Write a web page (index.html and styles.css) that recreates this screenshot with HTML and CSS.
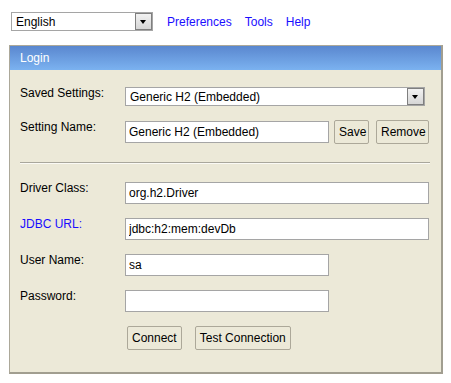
FILE: index.html
```html
<!DOCTYPE html>
<html lang="en">
<head>
    <meta charset="UTF-8">
    <title>H2 Console</title>
    <link rel="stylesheet" href="styles.css">
</head>
<body>
    <div class="topbar">
        <div class="select lang">
            <span class="select-text">English</span>
            <span class="select-arrow"></span>
        </div>
        <a href="#" class="link">Preferences</a>
        <a href="#" class="link">Tools</a>
        <a href="#" class="link">Help</a>
    </div>

    <div class="panel">
        <div class="panel-head">Login</div>
        <div class="panel-body">
            <div class="row first">
                <label class="label">Saved Settings:</label>
                <div class="select saved">
                    <span class="select-text">Generic H2 (Embedded)</span>
                    <span class="select-arrow"></span>
                </div>
            </div>
            <div class="row">
                <label class="label">Setting Name:</label>
                <input type="text" class="field short" value="Generic H2 (Embedded)">
                <button class="btn save">Save</button>
                <button class="btn remove">Remove</button>
            </div>

            <div class="sep"></div>

            <div class="row">
                <label class="label">Driver Class:</label>
                <input type="text" class="field long" value="org.h2.Driver">
            </div>
            <div class="row">
                <a href="#" class="label label-link">JDBC URL:</a>
                <input type="text" class="field long" value="jdbc:h2:mem:devDb">
            </div>
            <div class="row">
                <label class="label">User Name:</label>
                <input type="text" class="field short" value="sa">
            </div>
            <div class="row">
                <label class="label">Password:</label>
                <input type="password" class="field short" value="">
            </div>
            <div class="actions">
                <button class="btn">Connect</button>
                <button class="btn">Test Connection</button>
            </div>
        </div>
    </div>
</body>
</html>
```

FILE: styles.css
```css
body {
    font-family: "Liberation Sans", Arial, sans-serif;
    font-size: 12px;
    margin: 0;
    padding: 12px 0 0 9px;
    background-color: #fff;
    color: #000;
}
.topbar {
    display: flex;
    align-items: center;
    height: 19px;
    padding-left: 2px;
}
.link {
    color: #1a0dff;
    text-decoration: none;
    margin-left: 13px;
}
.lang + .link {
    margin-left: 14px;
}
.select {
    display: flex;
    align-items: center;
    justify-content: space-between;
    box-sizing: border-box;
    height: 19px;
    border: 1px solid #a5a5a5;
    background: #fff;
    padding: 0 0 0 4px;
}
.lang {
    width: 142px;
}
.saved {
    width: 300px;
}
.select-arrow {
    position: relative;
    box-sizing: border-box;
    width: 17px;
    height: 17px;
    border: 1px solid #7f7f7f;
    background: linear-gradient(#f2f2f2, #d6d6d6);
}
.select-arrow::after {
    content: "";
    position: absolute;
    left: 4px;
    top: 6px;
    border-left: 3.5px solid transparent;
    border-right: 3.5px solid transparent;
    border-top: 4px solid #000;
}
.panel {
    margin-top: 14px;
    width: 434px;
    box-sizing: border-box;
    border: 1px solid #aca899;
    border-right: 2px solid #a19e90;
    border-bottom: 2px solid #a19e90;
    background-color: #ece9d8;
}
.panel-head {
    height: 24px;
    line-height: 24px;
    padding-left: 10px;
    color: #fff;
    font-size: 12px;
    background: linear-gradient(#5a87cf, #7bb2f0);
}
.panel-body {
    padding: 17px 0 22px 10px;
}
.row {
    display: flex;
    align-items: flex-start;
    margin-bottom: 14px;
}
.row.first {
    margin-bottom: 15px;
}
.label {
    width: 105px;
    flex-shrink: 0;
    line-height: 14px;
    margin-top: -1px;
}
.label-link {
    color: #1a0dff;
    text-decoration: none;
}
.field {
    box-sizing: border-box;
    height: 22px;
    border: 1px solid #a5a5a5;
    background: #fff;
    padding: 0 3px;
    font-family: inherit;
    font-size: 12px;
    margin: 0;
    outline: none;
}
.short {
    width: 204px;
}
.long {
    width: 304px;
}
.btn {
    box-sizing: border-box;
    height: 24px;
    padding: 0 4px;
    margin: -1px 0 0 0;
    border: 1px solid #aca899;
    border-radius: 2px;
    background: #ece9d8;
    font-family: inherit;
    font-size: 12px;
    color: #000;
}
.save {
    margin-left: 5px;
    width: 35px;
}
.remove {
    margin-left: 7px;
    width: 53px;
}
.sep {
    margin: 18px 11px 18px 0;
    border-top: 1px solid #a9a79c;
    border-bottom: 1px solid #fbfaf5;
}
.actions {
    display: flex;
    gap: 13px;
    padding-left: 107px;
}
.actions .btn {
    margin: 0;
    height: 24px;
}
```
